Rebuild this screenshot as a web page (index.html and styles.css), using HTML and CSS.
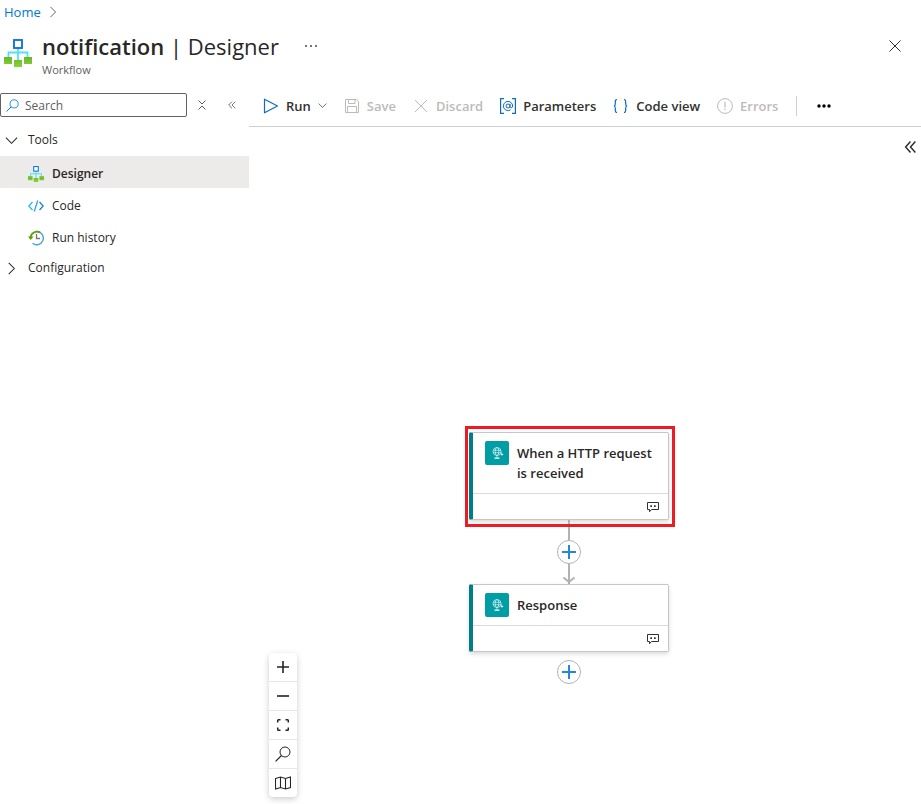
FILE: index.html
```html
<!DOCTYPE html>
<html lang="en">
<head>
<meta charset="utf-8">
<title>notification | Designer</title>
<link rel="stylesheet" href="styles.css">
</head>
<body>
<svg class="defs" aria-hidden="true">
  <defs>
    <linearGradient id="green" x1="0" y1="0" x2="0" y2="1"><stop offset="0" stop-color="#6bb52a"/><stop offset="1" stop-color="#86d633"/></linearGradient>
    <symbol id="flow" viewBox="0 0 28 28">
      <path d="M14 9v12M4.500 18v-4.500h19V18" fill="none" stroke="#50e0fb" stroke-width="1.800"/>
      <rect x="10" y="1" width="8" height="8" fill="#fff" stroke="#0f78d4" stroke-width="1.900"/>
      <path d="M0 18h8v7H0zM10 21h8v7h-8zM20 18h8v7h-8z" fill="url(#green)"/>
    </symbol>
    <symbol id="search" viewBox="0 0 16 16">
      <circle cx="10" cy="6" r="5" fill="none" stroke="currentColor"/>
      <path d="M6.500 9.500L.6 15.400" stroke="currentColor" stroke-width="1.200"/>
    </symbol>
    <symbol id="down" viewBox="0 0 14 14"><path d="M1 4l6 6 6-6" fill="none" stroke="currentColor" stroke-width="1.100"/></symbol>
    <symbol id="right" viewBox="0 0 14 14"><path d="M4 1l6 6-6 6" fill="none" stroke="currentColor" stroke-width="1.100"/></symbol>
    <symbol id="left2" viewBox="0 0 12 12"><path d="M6 2L2 6l4 4M10 2L6 6l4 4" fill="none" stroke="currentColor"/></symbol>
    <symbol id="cross" viewBox="0 0 12 12"><path d="M.5.5l11 11M11.500.5l-11 11" stroke="currentColor"/></symbol>
    <symbol id="globe" viewBox="0 0 24 24">
      <g fill="none" stroke="#fff" stroke-opacity=".85" stroke-width=".7">
        <circle cx="12" cy="10.500" r="4"/><ellipse cx="12" cy="10.500" rx="1.800" ry="4"/>
        <path d="M8 9.300h8M8 11.700h7M12 14.500v3M16 10.500v3h2"/>
      </g>
      <path d="M9.500 16.500h5v1.300h-5zM16.500 12l2 1.400-2 1.400z" fill="#fff"/>
    </symbol>
    <symbol id="comment" viewBox="0 0 14 12">
      <path d="M1.500 1.500h11v7H5.500L3.500 10.800V8.500h-2z" fill="none" stroke="#323130"/>
      <path d="M4.300 4.300h1.700V6H4.300zM8 4.300h1.700V6H8z" fill="#323130"/>
    </symbol>
    <symbol id="plus" viewBox="0 0 14 14"><path d="M7 0v14M0 7h14" stroke="currentColor" stroke-width="2"/></symbol>
  </defs>
</svg>

<header class="page-header">
  <nav class="crumbs" aria-label="Breadcrumb"><a href="#">Home</a><svg class="crumb-arrow"><use href="#right"/></svg></nav>
  <div class="heading">
    <svg class="logo"><use href="#flow"/></svg>
    <div class="heading-text">
      <div class="title-line">
        <h1><strong>notification</strong> | Designer</h1>
        <button class="icon-button more" type="button" aria-label="More"><svg viewBox="0 0 12 2"><path d="M0 0h2v2H0zM5 0h2v2H5zM10 0h2v2h-2z" fill="#797775"/></svg></button>
      </div>
      <p>Workflow</p>
    </div>
    <button class="icon-button close" type="button" aria-label="Close"><svg><use href="#cross"/></svg></button>
  </div>
</header>

<div class="body">
  <aside class="sidebar">
    <div class="search-row">
      <label class="search"><svg><use href="#search"/></svg><input type="text" placeholder="Search" aria-label="Search"></label>
      <button class="icon-button" type="button" aria-label="Collapse groups"><svg class="small" viewBox="0 0 10 10"><path d="M1.500.5L5 4 8.500.5M1.500 9.500L5 6l3.500 3.500" fill="none" stroke="currentColor"/></svg></button>
      <button class="icon-button" type="button" aria-label="Hide menu"><svg class="small"><use href="#left2"/></svg></button>
    </div>
    <nav class="menu">
      <button class="group" type="button"><svg><use href="#down"/></svg>Tools</button>
      <a class="item selected" href="#"><svg><use href="#flow"/></svg>Designer</a>
      <a class="item" href="#"><svg viewBox="0 0 16 16" fill="none" stroke-width="1.300"><path d="M4.500 4L.8 8l3.700 4" stroke="#32b5ee"/><path d="M11.500 4l3.700 4-3.700 4" stroke="#1583d8"/><path d="M9.800 2.500l-3.600 11" stroke="#3c9ce8"/></svg>Code</a>
      <a class="item" href="#"><svg viewBox="0 0 16 16" fill="none"><path d="M9 1.500A6.600 6.600 0 1 1 4.500 13.200" stroke="#4aa5d8" stroke-width="1.400"/><path d="M12 2.400A6.600 6.600 0 0 0 2.500 7.500" stroke="#57a300" stroke-width="1.800"/><path d="M0 6.500h5.600L2.700 10z" fill="#57a300"/><path d="M8.500 4v4.500H12" stroke="#777" stroke-width="1.300"/></svg>Run history</a>
      <button class="group" type="button"><svg><use href="#right"/></svg>Configuration</button>
    </nav>
  </aside>

  <main class="designer">
    <div class="toolbar" role="toolbar">
      <button type="button"><svg class="blue" viewBox="0 0 16 16"><path d="M1.500 1.200v13.600L14.500 8z" fill="none" stroke="currentColor" stroke-linejoin="round" stroke-width="1.200"/></svg>Run<svg class="caret"><use href="#down"/></svg></button>
      <button type="button" disabled><svg viewBox="0 0 16 16"><path d="M1.500 1.500h11l2 2v11h-13zM4.500 1.500v4h6.500v-4M3.500 14.500v-6h9v6" fill="none" stroke="currentColor" stroke-linejoin="round"/></svg>Save</button>
      <button type="button" disabled><svg viewBox="0 0 16 16"><path d="M2 2l12 12M14 2L2 14" stroke="currentColor"/></svg>Discard</button>
      <button type="button"><svg class="blue" viewBox="0 0 16 16" fill="none" stroke="currentColor"><path d="M4 .6H.6v14.800H4M12 .6h3.400v14.800H12" stroke-width="1.200"/><circle cx="8" cy="8" r="2"/><path d="M10 5.800v3c0 1.600 2.600 1.400 2.600-.8a4.600 4.600 0 1 0-2 3.800"/></svg>Parameters</button>
      <button type="button"><svg class="blue" viewBox="0 0 16 16"><path d="M4 1.500C2.300 1.500 2.300 2.500 2.300 4v2C2.300 7.500 1.500 8 .8 8c.7 0 1.500.5 1.500 2v2c0 1.500 0 2.500 1.700 2.500M11 1.500c1.700 0 1.700 1 1.700 2.500v2c0 1.500.8 2 1.500 2-.7 0-1.500.5-1.500 2v2c0 1.500 0 2.500-1.700 2.500" fill="none" stroke="currentColor" stroke-width="1.200"/></svg>Code view</button>
      <button type="button" disabled><svg viewBox="0 0 16 16"><circle cx="8" cy="8" r="7.400" fill="none" stroke="currentColor"/><path d="M8 3.800v5.700M8 10.800v1.400" stroke="currentColor" stroke-width="1.200"/></svg>Errors</button>
      <span class="separator"></span>
      <button type="button" aria-label="More commands"><svg viewBox="0 0 16 16"><circle cx="3" cy="8" r="1.700"/><circle cx="8" cy="8" r="1.700"/><circle cx="13" cy="8" r="1.700"/></svg></button>
    </div>

    <div class="canvas">
      <button class="icon-button expand" type="button" aria-label="Expand panel"><svg viewBox="0 0 12 12"><path d="M6 1L1.500 6 6 11M10.500 1L6 6l4.500 5" fill="none" stroke="currentColor" stroke-width="1.300"/></svg></button>

      <div class="graph">
        <article class="card highlighted">
          <div class="card-head"><svg><use href="#globe"/></svg><h2>When a HTTP request is received</h2></div>
          <div class="card-foot"><svg><use href="#comment"/></svg></div>
        </article>
        <div class="edge"></div>
        <button class="add" type="button" aria-label="Add step"><svg><use href="#plus"/></svg></button>
        <div class="edge"><svg class="arrow" viewBox="0 0 14 8"><path d="M1.500 1.500L7 6l5.500-4.500" fill="none" stroke="#b3b0b8" stroke-width="2"/></svg></div>
        <article class="card">
          <div class="card-head"><svg><use href="#globe"/></svg><h2>Response</h2></div>
          <div class="card-foot"><svg><use href="#comment"/></svg></div>
        </article>
        <button class="add last" type="button" aria-label="Add step"><svg><use href="#plus"/></svg></button>
      </div>

      <div class="controls">
        <button type="button" aria-label="Zoom in"><svg viewBox="0 0 16 16"><path d="M8 2v12M2 8h12" stroke="currentColor" stroke-width="1.600"/></svg></button>
        <button type="button" aria-label="Zoom out"><svg viewBox="0 0 16 16"><path d="M2 8h12" stroke="currentColor" stroke-width="1.600"/></svg></button>
        <button type="button" aria-label="Fit view"><svg viewBox="0 0 16 16"><path d="M2.700 5.500V3.500q0-.8.8-.8h2M10.500 2.700h2q.8 0 .8.8v2M13.300 10.500v2q0 .8-.8.8h-2M5.500 13.300h-2q-.8 0-.8-.8v-2" fill="none" stroke="currentColor" stroke-width="1.500"/></svg></button>
        <button type="button" aria-label="Find"><svg viewBox="0 0 16 16"><use href="#search"/></svg></button>
        <button type="button" aria-label="Minimap"><svg viewBox="0 0 16 16"><path d="M.5 3.500l5-1.500 5 1.500 5-1.500v10.500l-5 1.500-5-1.500-5 1.500zM5.500 2v10.500M10.500 3.500V14" fill="none" stroke="currentColor" stroke-width="1.100"/></svg></button>
      </div>
    </div>
  </main>
</div>
</body>
</html>
```
FILE: styles.css
```css
* { box-sizing: border-box; }

body {
  display: flex;
  flex-direction: column;
  min-height: 100vh;
  margin: 0;
  background: #fff;
  color: #292827;
  font: 12px/20px "Open Sans", "Noto Sans", sans-serif;
}

button { border: 0; padding: 0; background: none; color: inherit; font: inherit; }
a { color: inherit; text-decoration: none; }
svg { display: block; flex: none; }
.defs { position: absolute; width: 0; height: 0; }

.page-header { height: 85px; }
.crumbs { display: flex; align-items: center; gap: 6px; height: 24px; padding-left: 4px; font-size: 13px; }
.crumbs a { color: #0078d4; }
.crumb-arrow { width: 12px; height: 12px; color: #605e5c; }
.heading { display: flex; align-items: flex-start; padding: 5px 20px 0 4px; }
.logo { width: 28px; height: 28px; margin-top: 10px; }
.heading-text { flex: 1; padding-left: 10px; }
.title-line { display: flex; align-items: center; gap: 26px; height: 33px; }
h1 { margin: 0; font-size: 22px; line-height: 32px; font-weight: 400; }
h1 strong { font-weight: 600; }
.heading p { margin: 0; color: #605e5c; font-size: 11px; line-height: 16px; }
.icon-button { display: flex; align-items: center; justify-content: center; }
.more svg { width: 12px; height: 2px; }
.close { height: 34px; color: #323130; }
.close svg { width: 12px; height: 12px; }

.body { display: flex; flex: 1; }
.sidebar { width: 249px; flex: none; }
.search-row { display: flex; align-items: center; height: 24px; margin-top: 8px; color: #605e5c; }
.search { display: flex; align-items: center; gap: 6px; width: 187px; height: 24px; padding: 0 5px; border: 1px solid #646260; border-radius: 2px; }
.search svg { width: 13px; height: 13px; color: #0078d4; }
.search input { flex: 1; min-width: 0; padding: 2px 0 0; border: 0; outline: 0; font: inherit; color: inherit; }
.search input::placeholder { color: #605e5c; opacity: 1; }
.search-row .icon-button { width: 30px; height: 24px; }
.small { width: 10px; height: 10px; }

.menu { display: flex; flex-direction: column; padding-top: 9px; }
.group { display: flex; align-items: center; gap: 10px; height: 28px; padding-left: 5px; text-align: left; }
.group svg { width: 13px; height: 13px; }
.item { display: flex; align-items: center; gap: 8px; height: 32px; padding: 3px 0 0 28px; }
.item svg { width: 16px; height: 16px; }
.selected { margin-top: 2px; background: #edebe9; font-weight: 600; }
.item + .group { margin-top: 2px; }

.designer { display: flex; flex: 1; flex-direction: column; min-width: 0; }
.toolbar { display: flex; align-items: center; gap: 17px; height: 42px; padding-left: 14px; border-bottom: 1px solid #d2d0ce; color: #323130; font-size: 13px; font-weight: 600; }
.toolbar button { display: flex; align-items: center; gap: 7px; }
.toolbar button:disabled { color: #bdbbb9; }
.toolbar svg { width: 16px; height: 16px; }
.toolbar .caret { width: 9px; height: 9px; }
.blue { color: #0f6cbd; }
.separator { width: 1px; height: 20px; margin: 0 2px 0 1px; background: #d2d0ce; }

.canvas { position: relative; flex: 1; min-height: 677px; }
.expand { position: absolute; top: 13px; right: 4px; }
.expand svg { width: 13px; height: 14px; }

.graph { position: absolute; top: 305px; left: 220px; display: flex; flex-direction: column; align-items: center; width: 200px; }
.card { position: relative; width: 100%; border: 1px solid #c8c6c4; border-left: 4px solid #007d87; border-radius: 2px; background: #fff; box-shadow: 0 2px 4px #00000026; }
.card-head { display: flex; gap: 8px; padding: 0 8px 0 12px; }
.card-head svg { width: 24px; height: 24px; margin-top: 8px; border-radius: 2px; background: #009da5; }
h2 { margin: 0; padding: 10px 0; font-size: 13px; line-height: 20px; font-weight: 600; }
.card-foot { display: flex; align-items: center; justify-content: flex-end; height: 26px; padding-right: 8px; border-top: 1px solid #dddbd9; }
.card-foot svg { width: 14px; height: 12px; }
.highlighted::after { content: ""; position: absolute; z-index: 1; inset: -7px -7px -8px -8px; border: 3px solid #ed1c24; }
.edge { position: relative; width: 2px; height: 20px; background: #b3b0b8; }
.arrow { position: absolute; bottom: 0; left: -6px; width: 14px; height: 8px; }
.add { display: flex; align-items: center; justify-content: center; width: 24px; height: 24px; border: 1px solid #b3b0b8; border-radius: 50%; background: #fff; color: #2488d8; }
.add svg { width: 14px; height: 14px; }
.last { margin-top: 8px; }

.controls { position: absolute; bottom: 7px; left: 20px; width: 28px; border-radius: 4px; background: #fff; box-shadow: 0 2px 6px #00000033; }
.controls button { display: flex; align-items: center; justify-content: center; width: 28px; height: 29px; border-bottom: 1px solid #e6e6e6; color: #242424; }
.controls button:last-child { height: 28px; border-bottom: 0; }
.controls svg { width: 16px; height: 16px; }
```
